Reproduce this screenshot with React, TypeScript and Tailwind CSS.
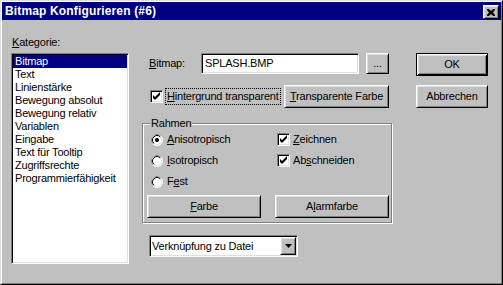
import React from "react";

const raised =
  "border border-t-white border-l-white border-r-black border-b-black shadow-[inset_1px_1px_0_#dfdfdf,inset_-1px_-1px_0_#808080] bg-[#c0c0c0]";
const sunken =
  "border border-t-[#808080] border-l-[#808080] border-r-white border-b-white shadow-[inset_1px_1px_0_#000,inset_-1px_-1px_0_#dfdfdf]";

function Btn({ className = "", children }: { className?: string; children: React.ReactNode }) {
  return (
    <div className={`${raised} flex items-center justify-center h-[23px] ${className}`}>
      {children}
    </div>
  );
}

function Check() {
  return (
    <div className={`${sunken} w-[13px] h-[13px] bg-white shrink-0 relative`}>
      <svg width="13" height="13" viewBox="0 0 13 13" className="absolute -left-px -top-px">
        <polygon points="3,5 5,7 10,2 10,5 5,10 3,8" fill="#000" />
      </svg>
    </div>
  );
}

function Radio({ on }: { on?: boolean }) {
  return (
    <svg width="12" height="12" viewBox="0 0 12 12" className="shrink-0">
      <circle cx="6" cy="6" r="5.5" fill="#fff" stroke="#fff" />
      <path d="M2.11 9.89 A5.5 5.5 0 0 1 9.89 2.11" fill="none" stroke="#808080" />
      <circle cx="6" cy="6" r="4.5" fill="#fff" stroke="#dfdfdf" />
      <path d="M2.82 9.18 A4.5 4.5 0 0 1 9.18 2.82" fill="none" stroke="#000" />
      {on && <circle cx="6" cy="6" r="2" fill="#000" />}
    </svg>
  );
}

const items = [
  "Bitmap",
  "Text",
  "Linienstärke",
  "Bewegung absolut",
  "Bewegung relativ",
  "Variablen",
  "Eingabe",
  "Text für Tooltip",
  "Zugriffsrechte",
  "Programmierfähigkeit",
];

export default function App() {
  return (
    <div className="w-[503px] h-[285px] bg-[#c0c0c0] font-['Liberation_Sans',Arial,sans-serif] text-[11px] leading-[13px] text-black tracking-[-0.2px] border border-t-[#dfdfdf] border-l-[#dfdfdf] border-r-black border-b-black">
      <div className="w-full h-full border border-t-white border-l-white border-r-[#808080] border-b-[#808080] flex flex-col">
        {/* Title bar */}
        <div className="h-[18px] shrink-0 bg-[#000080] flex items-center justify-between pl-[3px] pr-[2px]">
          <span className="text-white font-bold text-[12px] tracking-[0.15px]">Bitmap Konfigurieren (#6)</span>
          <div className={`${raised} w-[16px] h-[14px] self-start mt-[3px] flex items-center justify-center`}>
            <svg width="8" height="7" viewBox="0 0 8 7">
              <path d="M0 0h2l2 2 2-2h2v1L6 3.5 8 6v1H6L4 5 2 7H0V6l2-2.5L0 1z" fill="#000" />
            </svg>
          </div>
        </div>

        {/* Body */}
        <div className="flex flex-1 pl-[9px]">
          {/* Left column */}
          <div className="flex flex-col pt-[16px] w-[118px]">
            <div className="h-[13px] pl-[1px]">
              <u>K</u>ategorie:
            </div>
            <div className={`${sunken} mt-[4px] h-[211px] w-[118px] bg-white pl-[1px] pr-[1px] pt-px`}>
              {items.map((t, i) => (
                <div
                  key={t}
                  className={`h-[13px] pl-[2px] whitespace-nowrap ${i === 0 ? "bg-[#000080] text-white" : ""}`}
                >
                  {t}
                </div>
              ))}
            </div>
          </div>

          {/* Middle column */}
          <div className="flex flex-col ml-[12px] w-[252px] pt-[33px]">
            <div className="flex items-center h-[21px]">
              <div className="pl-[8px] w-[60px]">
                <u>B</u>itmap:
              </div>
              <div className={`${sunken} w-[158px] h-[21px] bg-white flex items-center pl-[3px]`}>SPLASH.BMP</div>
              <Btn className="ml-[7px] w-[23px] !h-[21px]">...</Btn>
            </div>

            <div className="flex items-center h-[23px] mt-[11px] pl-[9px]">
              <Check />
              <div className="ml-[2px] w-[116px] h-[17px] border border-dotted border-black flex items-center pl-px whitespace-nowrap">
                <u>H</u>intergrund transparent
              </div>
              <Btn className="ml-[3px] w-[105px]">
                <span>
                  <u>T</u>ransparente Farbe
                </span>
              </Btn>
            </div>

            <div className="relative mt-[15px] ml-[1px] w-[250px] h-[100px] border border-[#808080] shadow-[inset_1px_1px_0_#fff,1px_1px_0_#fff] pt-[5px]">
              <div className="absolute left-[7px] -top-[7px] px-[1px] bg-[#c0c0c0] h-[13px]">Rahmen</div>
              <div className="flex items-center h-[21px] pl-[8px]">
                <div className="flex items-center w-[126px]">
                  <Radio on />
                  <span className="ml-[4px]">
                    <u>A</u>nisotropisch
                  </span>
                </div>
                <Check />
                <span className="ml-[3px]">
                  <u>Z</u>eichnen
                </span>
              </div>
              <div className="flex items-center h-[21px] pl-[8px]">
                <div className="flex items-center w-[126px]">
                  <Radio />
                  <span className="ml-[4px]">
                    <u>I</u>sotropisch
                  </span>
                </div>
                <Check />
                <span className="ml-[3px]">
                  Ab<u>s</u>chneiden
                </span>
              </div>
              <div className="flex items-center h-[21px] pl-[8px]">
                <Radio />
                <span className="ml-[4px]">
                  F<u>e</u>st
                </span>
              </div>
              <div className="flex mt-[3px] pl-[4px]">
                <Btn className="w-[114px]">
                  <span>
                    <u>F</u>arbe
                  </span>
                </Btn>
                <Btn className="ml-[14px] w-[114px]">
                  <span>
                    A<u>l</u>armfarbe
                  </span>
                </Btn>
              </div>
            </div>

            <div className={`${sunken} mt-[12px] ml-[8px] w-[149px] h-[22px] bg-white flex items-center`}>
              <span className="pl-[2px] flex-1 whitespace-nowrap">Verknüpfung zu Datei</span>
              <div className={`${raised} w-[16px] h-[18px] mr-[1px] flex items-center justify-center`}>
                <svg width="7" height="4" viewBox="0 0 7 4">
                  <path d="M0 0h7L3.5 4z" fill="#000" />
                </svg>
              </div>
            </div>
          </div>

          {/* Right column */}
          <div className="flex flex-col ml-[23px] pt-[33px] w-[72px]">
            <div className="w-[72px] h-[23px] border border-black bg-[#c0c0c0] shadow-[inset_1px_1px_0_#fff,inset_-1px_-1px_0_#000,inset_2px_2px_0_#dfdfdf,inset_-2px_-2px_0_#808080] flex items-center justify-center">
              OK
            </div>
            <Btn className="mt-[9px] w-[72px]">Abbrechen</Btn>
          </div>
        </div>
      </div>
    </div>
  );
}
